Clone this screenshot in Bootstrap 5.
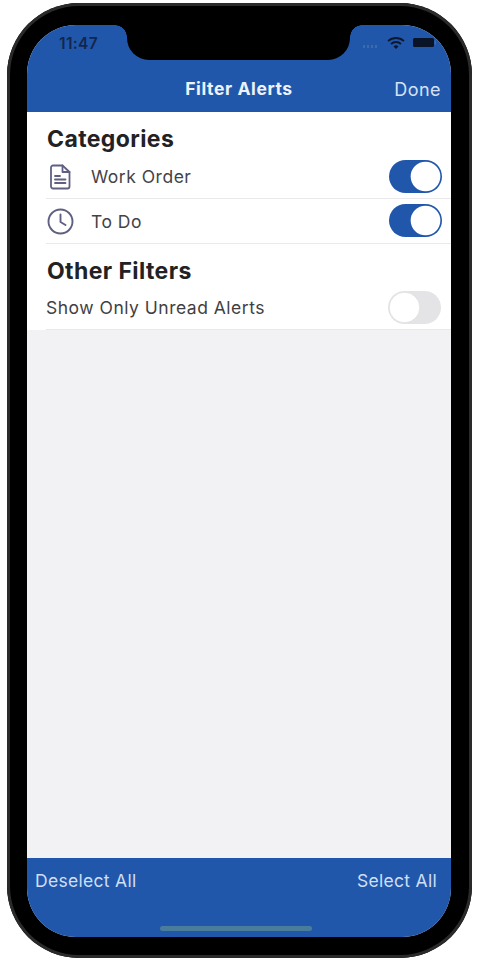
<!DOCTYPE html>
<html lang="en">
<head>
<meta charset="utf-8">
<title>Filter Alerts</title>
<link href="https://cdn.jsdelivr.net/npm/bootstrap@5.3.0/dist/css/bootstrap.min.css" rel="stylesheet">
<style>
html,body{height:960px;overflow:hidden;background:#fff}
body{font-family:Inter,"Liberation Sans",sans-serif;padding:3px 8px 2px 7px;color:#2b2b2d}
.phone-shell{height:955px;background:#000;border-radius:72px;padding:22px 21px 21px 20px;box-shadow:inset 0 0 0 3px #2a2a2c}
.phone-screen{height:100%;border-radius:49px;overflow:hidden;position:relative;background:#f2f2f4}
.notch-cut{position:absolute;left:100px;top:0;width:223px;height:35px;background:#000;border-radius:0 0 22px 22px}
.notch-cut::before,.notch-cut::after{content:"";position:absolute;top:0;width:12px;height:12px}
.notch-cut::before{left:-12px;background:radial-gradient(circle at 0 100%,transparent 11.5px,#000 12px)}
.notch-cut::after{right:-12px;background:radial-gradient(circle at 100% 100%,transparent 11.5px,#000 12px)}
.app-top{height:87px;background:#2157ab;color:#e9f0fa;flex:none}
.status-row{height:38px;padding:0 14px 0 32px}
.status-time{font-size:15.5px;font-weight:600;color:#12264f;letter-spacing:.35px}
.nav-row{height:49px;padding:4px 10px 0;position:relative}
.nav-title{font-size:17.5px;font-weight:700;flex:1;text-align:center;letter-spacing:.6px;color:#eef3fb}
.nav-done{font-size:18px;font-weight:400;letter-spacing:.45px;color:#d5e2f5;position:absolute;right:10px}
.sheet{background:#fff;flex:none}
.group-title{font-size:23px;font-weight:700;line-height:1;letter-spacing:.4px;color:#222224;padding-left:20px;margin:0}
.first-title{padding-top:16px}
.next-title{padding-top:16px}
.opt-row{margin-left:19px;border-bottom:1px solid #e9e9ec;padding-right:9px;display:flex;align-items:center}
.row-work{height:48px;padding-top:4px}
.row-todo{height:45px}
.row-unread{height:47px;padding-top:5px;padding-right:10px}
.opt-icon{width:28px;flex:none;display:flex;justify-content:center}
.opt-label{font-size:17.5px;letter-spacing:.5px;color:#434347;margin-left:17px}
.row-work .opt-label{margin-top:2px}
.row-todo .opt-label{margin-top:3px}
.opt-plain{font-size:17.5px;letter-spacing:.5px;color:#3f3f43}
.opt-row .form-check{margin:0;padding:0;min-height:0;display:flex}
.row-todo .form-check{margin-top:-2px}
.row-unread .form-check{margin-top:-2px}
.opt-row .form-check-input{width:53px;height:33px;margin:0;border:0;float:none;background-color:#e4e4e7;background-position:left center;background-image:url("data:image/svg+xml,%3csvg xmlns='http://www.w3.org/2000/svg' viewBox='-4 -4 8 8'%3e%3ccircle r='3.7' fill='%23fff' stroke='%23d0d0d4' stroke-width='.12'/%3e%3c/svg%3e")}
.opt-row .form-check-input:checked{background-color:#2157ab;background-position:right center;background-image:url("data:image/svg+xml,%3csvg xmlns='http://www.w3.org/2000/svg' viewBox='-4 -4 8 8'%3e%3ccircle r='3.6' fill='%23fff'/%3e%3c/svg%3e")}
.app-bottom{height:79px;background:#2157ab;color:#cfdff5;font-size:17.5px;letter-spacing:.3px;padding:10px 14px 0 8px;position:relative;flex:none}
.home-bar{position:absolute;left:133px;bottom:6px;width:152px;height:5px;background:#4a7d9c;border-radius:3px}
</style>
</head>
<body>
<div class="phone-shell">
  <div class="phone-screen d-flex flex-column">
    <header class="app-top">
      <div class="status-row d-flex align-items-center justify-content-between">
        <span class="status-time">11:47</span>
        <svg width="74" height="14" viewBox="0 0 74 14" aria-hidden="true">
          <g fill="#3f6aa8"><rect x="0" y="8" width="2" height="3"/><rect x="4" y="8" width="2" height="3"/><rect x="8" y="8" width="2" height="3"/><rect x="12" y="8" width="2" height="3"/></g>
          <g fill="none" stroke="#0d1830" stroke-width="2"><path d="M25 4a12 12 0 0 1 16 0"/><path d="M28 7a7.5 7.5 0 0 1 10 0"/></g>
          <path d="M30.5 9.5a3.5 3.5 0 0 1 5 0L33 12z" fill="#0d1830"/>
          <rect x="50" y="1" width="21" height="9" rx="1.5" fill="#0a1428"/><rect x="71.5" y="3.5" width="1.5" height="4" fill="#3f6aa8"/>
        </svg>
      </div>
      <div class="nav-row d-flex align-items-center">
        <span class="nav-title">Filter Alerts</span>
        <span class="nav-done">Done</span>
      </div>
    </header>
    <main class="sheet">
      <h2 class="group-title first-title">Categories</h2>
      <div class="opt-row row-work">
        <span class="opt-icon">
          <svg width="22" height="26" viewBox="0 0 22 26" fill="none" stroke="#5f5f82" stroke-width="1.8" stroke-linejoin="round" stroke-linecap="round" aria-hidden="true"><path d="M4 1.5h9.5L20.5 8v14.5a2 2 0 0 1-2 2H4a2 2 0 0 1-2-2v-19a2 2 0 0 1 2-2z"/><path d="M13.5 1.5V8h7"/><path d="M6 12h5M6 15.5h10.5M6 19h10.5"/></svg>
        </span>
        <span class="opt-label">Work Order</span>
        <span class="form-check form-switch ms-auto"><input class="form-check-input" type="checkbox" role="switch" checked aria-label="Work Order"></span>
      </div>
      <div class="opt-row row-todo">
        <span class="opt-icon">
          <svg width="27" height="27" viewBox="0 0 27 27" fill="none" stroke="#5f5f82" stroke-width="1.9" stroke-linecap="round" stroke-linejoin="round" aria-hidden="true"><circle cx="13.5" cy="13.5" r="12"/><path d="M13.5 6.5v7.5l5 3"/></svg>
        </span>
        <span class="opt-label">To Do</span>
        <span class="form-check form-switch ms-auto"><input class="form-check-input" type="checkbox" role="switch" checked aria-label="To Do"></span>
      </div>
      <h2 class="group-title next-title">Other Filters</h2>
      <div class="opt-row row-unread">
        <span class="opt-plain">Show Only Unread Alerts</span>
        <span class="form-check form-switch ms-auto"><input class="form-check-input" type="checkbox" role="switch" aria-label="Show Only Unread Alerts"></span>
      </div>
    </main>
    <div class="flex-grow-1"></div>
    <footer class="app-bottom d-flex justify-content-between align-items-start">
      <span>Deselect All</span>
      <span>Select All</span>
      <div class="home-bar"></div>
    </footer>
    <div class="notch-cut"></div>
  </div>
</div>
<script src="https://cdn.jsdelivr.net/npm/bootstrap@5.3.0/dist/js/bootstrap.bundle.min.js"></script>
</body>
</html>
